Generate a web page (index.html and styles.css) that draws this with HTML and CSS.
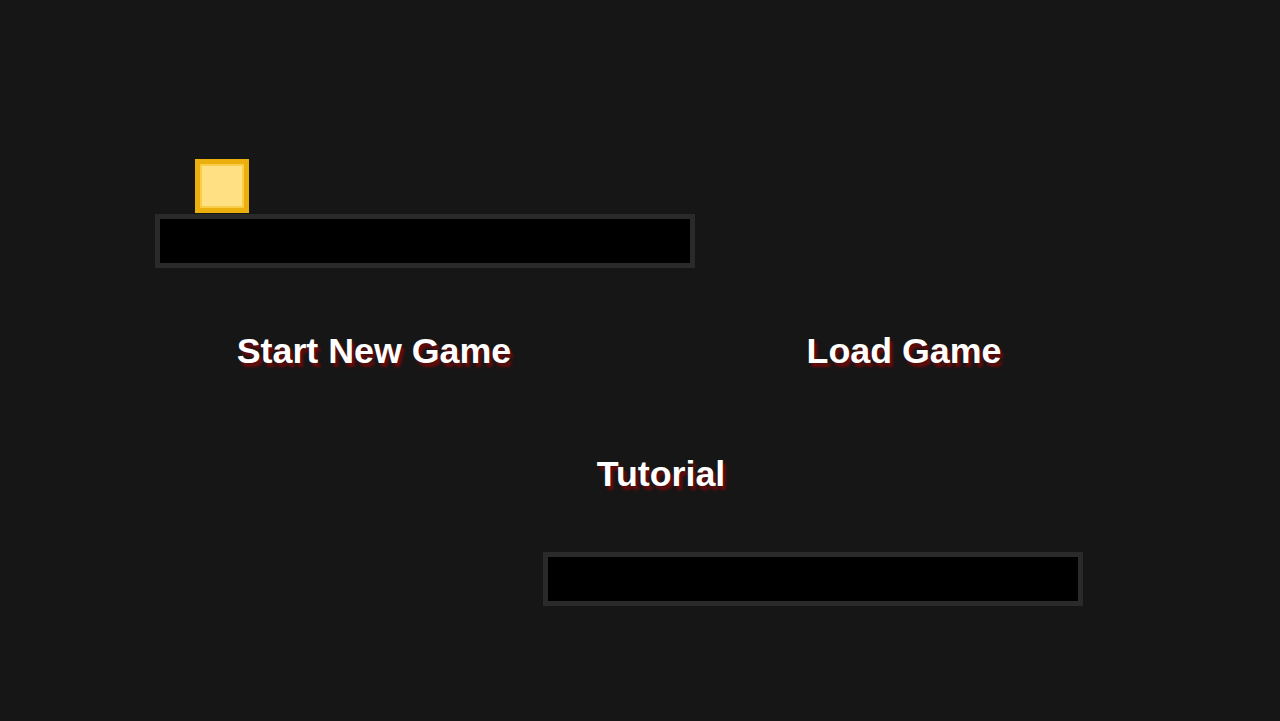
FILE: index.html
```html
<!DOCTYPE html>
<html>
<head>
<meta charset="utf-8">
<link rel="stylesheet" href="styles.css">
</head>
<body>
<main class="screen">
  <section class="stage stage-top">
    <div class="player"></div>
    <div class="bar"></div>
  </section>
  <nav class="menu">
    <div class="menu-row">
      <button class="menu-btn">Start New Game</button>
      <button class="menu-btn">Load Game</button>
    </div>
    <div class="menu-row menu-row-single">
      <button class="menu-btn">Tutorial</button>
    </div>
  </nav>
  <section class="stage stage-bottom">
    <div class="bar"></div>
  </section>
</main>
</body>
</html>
```
FILE: styles.css
```css
* { box-sizing: border-box; }
html, body {
  margin: 0;
  padding: 0;
  background: #161616;
  width: 1280px;
  height: 721px;
  overflow: hidden;
}
.screen {
  display: flex;
  flex-direction: column;
  padding-top: 159px;
  font-family: "Liberation Sans", Arial, sans-serif;
}
.stage {
  display: flex;
  flex-direction: column;
}
.stage-top {
  padding-left: 155px;
}
.player {
  width: 54px;
  height: 54px;
  margin-left: 40px;
  margin-bottom: 1px;
  background: #ffe083;
  border: 5px solid #ebb00e;
  box-shadow: inset 0 0 0 2px #f9cd45;
}
.bar {
  width: 540px;
  height: 54px;
  background: #000;
  border: 5px solid #2a2a2a;
}
.menu {
  display: flex;
  flex-direction: column;
  padding-top: 62px;
}
.menu-row {
  display: flex;
}
.menu-btn {
  background: none;
  border: 0;
  padding: 0;
  margin: 0;
  font-family: "Liberation Sans", Arial, sans-serif;
  font-weight: 700;
  font-size: 35.8px;
  line-height: 42px;
  color: #fff;
  text-shadow: 3px 4px 3px #6e0a0a;
  text-align: center;
  cursor: pointer;
}
.menu-row .menu-btn:nth-child(1) { width: 530px; margin-left: 109px; }
.menu-row .menu-btn:nth-child(2) { width: 530px; margin-left: 0; }
.menu-row-single { padding-top: 81px; }
.menu-row-single .menu-btn:nth-child(1) { width: 530px; margin-left: 396px; }
.stage-bottom {
  padding-left: 543px;
  padding-top: 57px;
}
```
